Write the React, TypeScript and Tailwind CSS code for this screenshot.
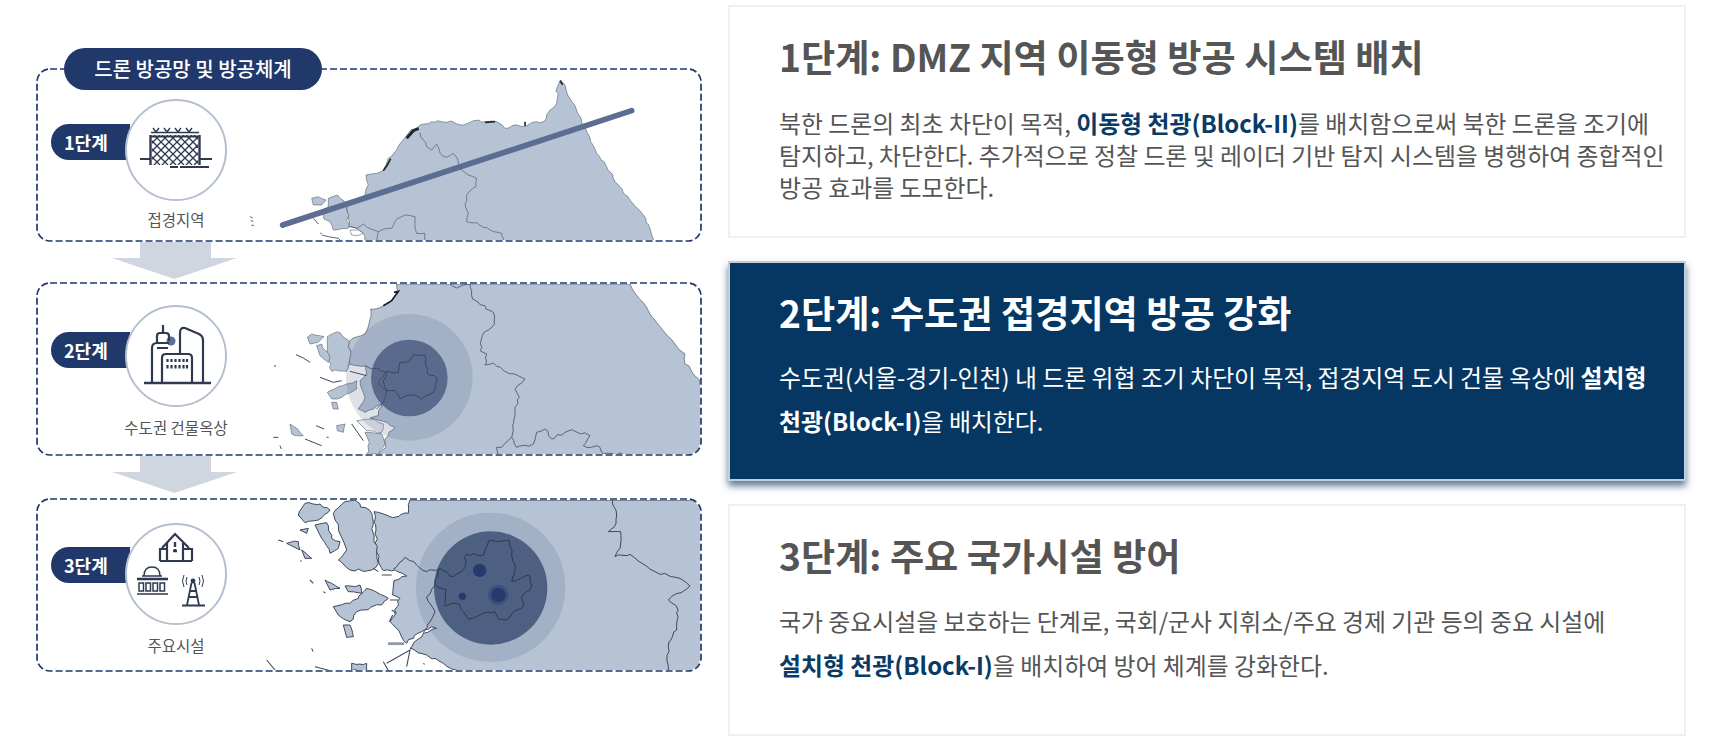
import React from "react";

const FONT = { fontFamily: '"Noto Sans CJK KR", "Noto Sans", sans-serif' };
const LAND = "#b5c3d5";
const LINE = "#3f4859";
const INK = "#2f3a4f";
const MAP_BOX = "-12 0 1362 510";

// Subdivides straight segments so that coast and boundary lines look hand-surveyed, not polygonal.
function rough(d: string) {
  let cx = 0;
  let cy = 0;
  let seed = 1;
  const noise = () => {
    seed += 1;
    const v = Math.sin(seed * 12.9898) * 43758.5453;
    return (v - Math.floor(v)) * 2 - 1;
  };
  return d
    .split(/(?=[MLHVZ])/)
    .map((seg) => {
      const cmd = seg[0];
      const n = seg.slice(1).trim().split(/\s+/).map(Number);
      if (cmd === "M") {
        cx = n[0];
        cy = n[1];
        return seg;
      }
      if (cmd === "H") {
        cx = n[0];
        return seg;
      }
      if (cmd === "V") {
        cy = n[0];
        return seg;
      }
      if (cmd === "L") {
        const [x, y] = n;
        const len = Math.hypot(x - cx, y - cy);
        const steps = Math.min(5, Math.max(1, Math.floor(len / 11)));
        const amp = Math.min(5, len * 0.09);
        let out = "";
        for (let i = 1; i < steps; i++) {
          const t = i / steps;
          const px = cx + (x - cx) * t + noise() * amp;
          const py = cy + (y - cy) * t + noise() * amp;
          out += `L${px.toFixed(1)} ${py.toFixed(1)}`;
        }
        cx = x;
        cy = y;
        return `${out}L${x} ${y}`;
      }
      return seg;
    })
    .join("");
}

function Fence() {
  const mesh: string[] = [];
  for (let i = -30; i < 60; i += 8) {
    mesh.push(`M${i} 36L${i + 30} 66`);
    mesh.push(`M${i + 30} 36L${i} 66`);
  }
  return (
    <svg viewBox="2 2 98 98" className="w-full h-full" fill="none" stroke={INK}>
      <g transform="translate(27 0)">
        <svg x="0" y="36" width="46" height="30" viewBox="0 36 46 30">
          <path d={mesh.join("")} strokeWidth="1.300" />
        </svg>
      </g>
      <path d="M25.500 36V66M74.500 36V66" strokeWidth="2.400" />
      <path d="M25 37.500H75" strokeWidth="2.200" />
      <path d="M26 33.500H74" strokeWidth="1.600" />
      <path d="M28 29l3 4 3-4M39 29l3 4 3-4M50 29l3 4 3-4M61 29l3 4 3-4" strokeWidth="1.400" />
      <path d="M15 60H25M75 60H87M45 68H53M55 68H84" strokeWidth="2" />
    </svg>
  );
}

function Buildings() {
  return (
    <svg viewBox="2 2 98 98" className="w-full h-full" fill="none" stroke={INK} strokeWidth="2.200">
      <circle cx="46" cy="36" r="4.500" fill="#5a6f9c" stroke="none" />
      <path d="M19 78H86" strokeWidth="2.400" />
      <path d="M38 20V28M32 38V31Q32 28 35 28H41Q44 28 44 31V36" />
      <path d="M27 78V43Q27 38 32 38H44M32 43H43" />
      <path d="M37 78V53Q37 49 41 49H63Q67 49 67 53V78" />
      <path d="M55 48V28Q55 22 60 23L74 29Q78 31 78 35V78" />
      <path d="M42.500 54v3M46.500 54v3M50.500 54v3M54.500 54v3M58.500 54v3M62 54v3M42.500 60v3.500M46.500 60v3.500M50.500 60v3.500M54.500 60v3.500M58.500 60v3.500M62 60v3.500" strokeWidth="2.200" />
    </svg>
  );
}

function Facilities() {
  return (
    <svg viewBox="2 2 98 98" className="w-full h-full" fill="none" stroke={INK} strokeWidth="2">
      <path d="M37 25L50 11L64 25" strokeWidth="2.200" />
      <path d="M42 38V20M58 38V20M35 38V26H42M58 26H67V38M35 38H67" strokeWidth="2.200" />
      <path d="M50 19v5M48 28h4M50 26v2" strokeWidth="2.400" />
      <path d="M19 53Q19 44 27 44Q35 44 35 53M17 53H37" strokeWidth="1.400" />
      <path d="M12 56H43" strokeWidth="2.400" />
      <path d="M14 60h4.500v8H14zM21 60h4.500v8H21zM28 60h4.500v8H28zM35 60h4.500v8H35z" strokeWidth="1.500" />
      <path d="M12 71H43" strokeWidth="1.600" />
      <circle cx="68" cy="58" r="2.400" fill={INK} stroke="none" />
      <path d="M62 54Q60 58 62 62M74 54Q76 58 74 62M59 52Q56 58 59 64M77 52Q80 58 77 64" strokeWidth="1" />
      <path d="M66.500 60L62 82M69.500 60L74 82M65 68H71M64 74H72" strokeWidth="1.800" />
      <path d="M57 82.500H80" strokeWidth="2.200" />
    </svg>
  );
}

function Map1() {
  return (
    <svg viewBox={MAP_BOX} className="w-full h-full block" fill="none">
      <path
        d={rough("M932 30L945 45L950 65L960 85L978 115L995 155L1010 185L1022 215L1040 250L1070 290L1105 345L1140 390L1180 435L1200 475L1212 512H345L340 490L318 474L298 470L293 410L345 375L355 345L348 315L380 310L400 300L415 265L440 240L455 215L475 190L510 165L545 155L590 157L605 153L640 165L670 152L710 155L740 155L765 175L800 165L825 170L845 158L880 155L900 120L920 100L922 50Z")}
        fill={LAND}
        stroke={LINE}
        strokeWidth="1.500"
      />
      <path d={rough("M235 385L262 375L290 405L295 475L250 480L240 455L222 447L218 420L235 410Z")} fill={LAND} stroke={LINE} strokeWidth="1.500" />
      <path d={rough("M185 385L205 380L228 390L215 405L190 405Z")} fill={LAND} stroke={LINE} strokeWidth="1.500" />
      <path d="M215 495L235 500L265 505L272 512H225M190 445L205 462M210 490h5M0 440l8 4M2 452l8 2M4 466h8" stroke={LINE} strokeWidth="2.500" />
      <path d={rough("M300 480L325 480L340 490L322 497L305 495Z")} fill="#fff" stroke={LINE} strokeWidth="1.500" />
      <path d="M470 205L490 182L506 175" stroke="#222730" strokeWidth="9" />
      <path d="M400 302L412 285L422 266M930 32L938 44M705 157L735 155M825 155V168" stroke="#222730" strokeWidth="5" />
      <path
        d={rough("M510 188L530 230L545 240L560 222L570 250L590 262L610 250L622 265L625 295L655 315L680 325L678 350L650 375L645 405L655 430L650 455L680 458L720 480L755 490L762 512M298 470L320 475L340 462L365 478L385 485L380 512M385 485L425 475L435 455L465 435L495 440L500 490L525 490L525 512")}
        stroke={LINE}
        strokeWidth="1.700"
      />
      <path d="M98 465L1145 122" stroke="#5c6d91" strokeWidth="17" strokeLinecap="round" />
    </svg>
  );
}

function Map2() {
  return (
    <svg viewBox={MAP_BOX} className="w-full h-full block" fill="none">
      <path
        d={rough("M440 0L445 25L420 55L395 68L362 75L357 120L345 150L298 172L298 240L345 245L350 268L330 290L345 340L325 375L345 385L370 375L395 360L385 395L360 402L400 412L435 430L405 465L408 490L385 512H1362V320L1340 280L1305 240L1305 210L1220 115L1190 70L1140 0Z")}
        fill={LAND}
        stroke={LINE}
        strokeWidth="1.800"
      />
      <path d={rough("M232 158L262 143L298 172L298 240L290 262L245 262L232 215Z")} fill={LAND} stroke={LINE} strokeWidth="1.500" />
      <path d={rough("M172 160L185 150L222 158L205 175L180 180Z")} fill={LAND} stroke={LINE} strokeWidth="1.500" />
      <path d={rough("M200 185L215 180L240 220L235 235L210 215Z")} fill={LAND} stroke={LINE} strokeWidth="1.500" />
      <path d={rough("M232 325L290 300L320 290L320 315L262 345L245 345Z")} fill={LAND} stroke={LINE} strokeWidth="1.500" />
      <path d="M245 355L260 355L265 375L250 375Z" fill={LAND} stroke={LINE} strokeWidth="1.500" />
      <path d={rough("M260 425L285 420L280 445L262 440ZM120 420L135 430L160 455L125 450ZM345 445L395 450L405 480L385 512L350 512L358 475Z")} fill={LAND} stroke={LINE} strokeWidth="1.500" />
      <path d={rough("M320 410L360 405L400 420L395 445L350 440Z")} fill="#e6e9ef" stroke={LINE} strokeWidth="1.500" />
      <path d="M138 212L160 222L180 235M210 280L250 295L275 290M165 465L215 485M70 460L85 460M198 425L222 435M72 246h6M300 262L350 275M305 420L340 470M90 485l4 10M230 460h6" stroke={LINE} strokeWidth="3" />
      <path d="M432 25L445 22L425 50L400 65" stroke="#1a1d24" strokeWidth="5" />
      <circle cx="478" cy="280" r="190" fill="#5b6b8e" fillOpacity="0.2" />
      <circle cx="478" cy="282" r="115" fill="#5a6a8c" />
      <path
        d={rough("M490 212L525 215L530 265L560 280L550 325L515 345L500 335L470 335L450 345L435 320L410 320L400 290L410 262L445 265L450 235L478 232Z")}
        stroke="#2f3850"
        strokeWidth="2.200"
      />
      <path
        d={rough("M600 0L620 12L640 3L660 0L668 45L705 65L708 75L730 85L733 120L697 155L690 200L710 210L705 243L730 237L770 265L825 285L795 315L808 340L795 385L790 440L785 460L755 490L740 490L745 512M785 460L800 490L850 480L860 445L885 435L905 465L945 445L965 437L1020 455L1000 485L1050 490L1060 510L1120 512M345 245L405 262M405 262L385 300L410 320L400 355L380 375")}
        stroke={LINE}
        strokeWidth="2.300"
      />
    </svg>
  );
}

function Map3() {
  return (
    <svg viewBox={MAP_BOX} className="w-full h-full block" fill="none">
      <path
        d={rough("M480 0L475 40L420 50L372 35L378 90L378 140L387 190L400 212L435 210L470 228L432 242L428 285L450 295L435 345L420 365L445 390L470 430L515 395L545 380L560 385L520 400L480 445L530 465L580 490L625 512H1362V0Z")}
        fill={LAND}
        stroke={LINE}
        strokeWidth="3"
      />
      <path d={rough("M250 40L285 5L315 0L365 40L370 100L380 150L385 190L365 210L300 210L265 180L290 150L255 60Z")} fill={LAND} stroke={LINE} strokeWidth="3" />
      <path d={rough("M145 45L165 10L210 12L240 30L205 60L165 68Z")} fill={LAND} stroke={LINE} strokeWidth="3" />
      <path d={rough("M195 75L230 68L245 115L270 125L265 145L240 160L215 115Z")} fill={LAND} stroke={LINE} strokeWidth="3" />
      <path d={rough("M250 320L300 310L350 265L415 295L395 315L320 335L300 365L265 345Z")} fill={LAND} stroke={LINE} strokeWidth="3" />
      <path d={rough("M225 240L245 250L270 265L240 270ZM285 258L330 255L335 280L295 275ZM280 375L300 375L310 410L290 412ZM110 130L145 125L150 150ZM155 150L185 175L165 175ZM150 90L175 85L170 100ZM305 490L350 490L350 512L305 512Z")} fill={LAND} stroke={LINE} strokeWidth="3" />
      <path d="M415 428H462V434H415Z" fill="#8f9fb5" stroke={LINE} strokeWidth="1" />
      <path d="M85 120L100 125M50 480L75 510M195 500L240 512M410 490L480 450L470 500M420 300L445 300M425 330L440 340M418 365L428 345M180 240L190 250M150 183h5M185 445l4 10M220 275l6 4M370 205L385 215M395 225L425 225M400 485L415 512M520 490l4 3" stroke={LINE} strokeWidth="3.200" />
      <circle cx="722" cy="262" r="224" fill="#5b6b8e" fillOpacity="0.2" />
      <circle cx="722" cy="264" r="170" fill="#4d6082" />
      <path
        d={rough("M718 120L745 125L778 122L785 165L795 195L785 245L840 228L845 258L815 290L822 315L790 335L770 360L745 358L735 335L690 345L655 357L620 310L585 318L590 270L555 255L570 205L610 230L640 210L650 162L700 165Z")}
        stroke="#2d3850"
        strokeWidth="3"
      />
      <circle cx="689" cy="211" r="20" fill="#263a6e" />
      <circle cx="745" cy="285" r="31" fill="#3d5080" />
      <circle cx="745" cy="285" r="22" fill="#263a6e" />
      <circle cx="637" cy="289" r="11" fill="#263a6e" />
      <path
        d={rough("M1088 0L1100 45L1098 70L1075 95L1112 95L1110 145L1095 170L1140 163L1215 215L1290 235L1320 258L1255 300L1285 330L1280 390L1255 440L1255 512M430 207L465 172L500 195L530 215L570 205M555 255L530 290L555 335L520 398")}
        stroke={LINE}
        strokeWidth="3"
      />
    </svg>
  );
}

function Arrow() {
  return (
    <svg viewBox="0 0 125 37" className="w-[125px] h-[37px] block" fill="#cfd6e0">
      <path d="M28 0H99V16H125L62.500 37L0 16H28Z" />
    </svg>
  );
}

function Panel({
  step,
  label,
  icon,
  map,
  circleTop,
  pillTop,
  labelTop,
}: {
  step: string;
  label: string;
  icon: React.ReactNode;
  map: React.ReactNode;
  circleTop: string;
  pillTop: string;
  labelTop: string;
}) {
  return (
    <div className="relative h-[174px] p-[2px]">
      <div className="flex h-[170px] rounded-[12px] overflow-hidden bg-white">
        <div className={`w-[208px] shrink-0 pl-[13px] ${circleTop}`}>
          <div className="flex items-start">
            <div className={`w-[79px] h-[36px] ${pillTop} -mr-[5px] rounded-l-[18px] bg-[#20386a] flex items-center pl-[13px] text-[18px] font-bold text-white leading-none`}>
              {step}
            </div>
            <div className="relative z-10 w-[102px] h-[102px] rounded-full border-[2px] border-[#b4bfd0] bg-white">
              {icon}
            </div>
          </div>
          <div className={`ml-[74px] w-[102px] ${labelTop} flex justify-center text-[15.5px] leading-[20px] text-[#555] whitespace-nowrap`}>
            {label}
          </div>
        </div>
        <div className="flex-1 min-w-0">{map}</div>
      </div>
      <svg className="absolute inset-0 w-full h-full pointer-events-none" fill="none">
        <rect x="1" y="1" width="664" height="172" rx="13" stroke="#20386a" strokeWidth="1.700" strokeDasharray="7 3" />
      </svg>
    </div>
  );
}

function Card({
  title,
  dark,
  height,
  lh,
  children,
}: {
  title: string;
  dark?: boolean;
  height: string;
  lh: string;
  children: React.ReactNode;
}) {
  return (
    <div
      className={`${height} pt-[26px] pl-[49px] pr-[10px] ${
        dark
          ? "bg-[#063763] border-2 border-[#c3ced9] text-white shadow-[0_5px_7px_rgba(6,55,99,0.65)]"
          : "bg-white border-2 border-[#f0f0f0] text-[#555]"
      }`}
    >
      <h2 className="text-[37.2px] leading-[46px] font-bold whitespace-nowrap">{title}</h2>
      <p className={`${lh} text-[23.9px] font-normal whitespace-nowrap`}>{children}</p>
    </div>
  );
}

export default function App() {
  const hl = "font-bold text-[#0a3a66]";
  return (
    <div style={FONT} className="w-[1709px] h-[743px] overflow-hidden bg-white flex items-start">
      <div className="ml-[36px] mt-[48px] w-[666px] shrink-0">
        <div className="relative z-10 ml-[28px] w-[258px] h-[42px] -mb-[22px] rounded-[21px] bg-[#20386a] flex items-center justify-center text-white text-[20px] font-medium">
          드론 방공망 및 방공체계
        </div>
        <Panel step="1단계" label="접경지역" icon={<Fence />} map={<Map1 />} circleTop="pt-[29px]" pillTop="mt-[25px]" labelTop="mt-[8px]" />
        <div className="ml-[76px] h-[40px]">
          <Arrow />
        </div>
        <Panel step="2단계" label="수도권 건물옥상" icon={<Buildings />} map={<Map2 />} circleTop="pt-[21px]" pillTop="mt-[27px]" labelTop="mt-[10px]" />
        <div className="ml-[76px] h-[42px]">
          <Arrow />
        </div>
        <Panel step="3단계" label="주요시설" icon={<Facilities />} map={<Map3 />} circleTop="pt-[23px]" pillTop="mt-[24px]" labelTop="mt-[10px]" />
      </div>
      <div className="ml-[26px] mt-[5px] w-[958px] shrink-0 flex flex-col">
        <Card title="1단계: DMZ 지역 이동형 방공 시스템 배치" height="h-[233px]" lh="leading-[32px] mt-[28px]">
          북한 드론의 최초 차단이 목적, <span className={hl}>이동형 천광(Block-II)</span>를 배치함으로써 북한 드론을 조기에
          <br />
          탐지하고, 차단한다. 추가적으로 정찰 드론 및 레이더 기반 탐지 시스템을 병행하여 종합적인
          <br />
          방공 효과를 도모한다.
        </Card>
        <div className="h-[23px]" />
        <Card dark title="2단계: 수도권 접경지역 방공 강화" height="h-[220px]" lh="leading-[44px] mt-[20px]">
          수도권(서울-경기-인천) 내 드론 위협 조기 차단이 목적, 접경지역 도시 건물 옥상에 <b className="font-bold">설치형</b>
          <br />
          <b className="font-bold">천광(Block-I)</b>을 배치한다.
        </Card>
        <div className="h-[23px]" />
        <Card title="3단계: 주요 국가시설 방어" height="h-[232px]" lh="leading-[44px] mt-[21px]">
          국가 중요시설을 보호하는 단계로, 국회/군사 지휘소/주요 경제 기관 등의 중요 시설에
          <br />
          <span className={hl}>설치형 천광(Block-I)</span>을 배치하여 방어 체계를 강화한다.
        </Card>
      </div>
    </div>
  );
}
